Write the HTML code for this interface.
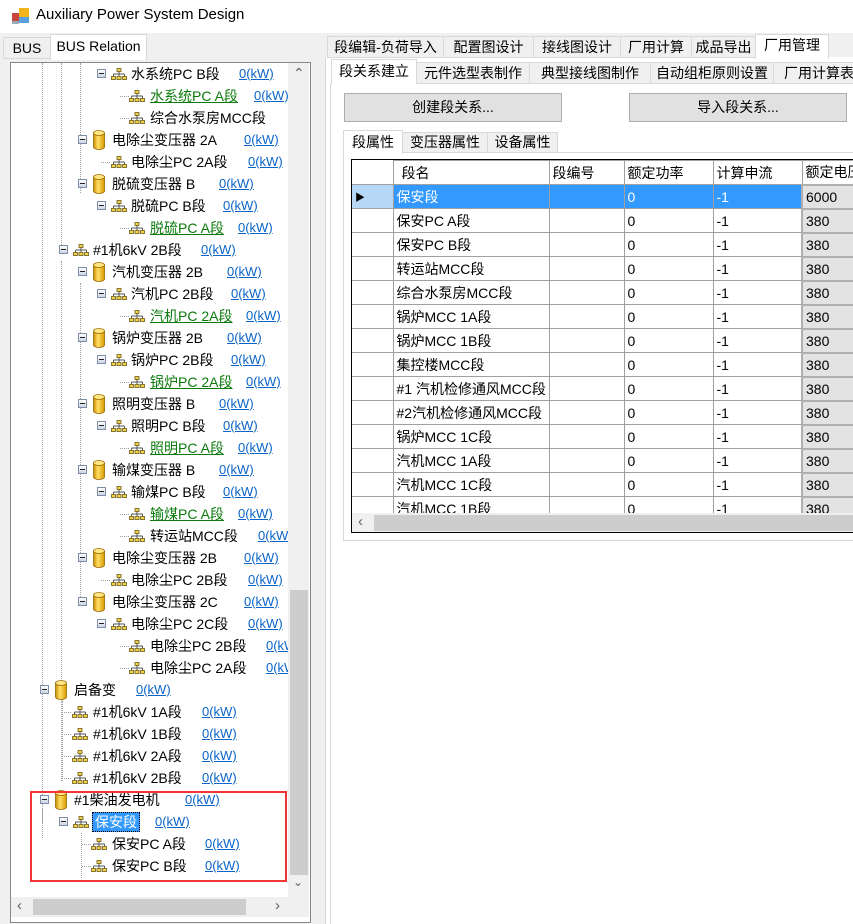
<!DOCTYPE html>
<html><head><meta charset="utf-8"><style>
*{box-sizing:border-box;margin:0;padding:0}
body{width:853px;height:924px;overflow:hidden;background:#f0f0f0;font-family:"Liberation Sans","Noto Sans CJK SC",sans-serif;font-size:14px;color:#000;position:relative}
.a{position:absolute}
.title{left:0;top:0;width:853px;height:33px;background:#fff}
.tab{position:absolute;border:1px solid #d9d9d9;background:#f0f0f0;text-align:center;white-space:nowrap}
.tab.on{background:#fff;border-bottom:none;z-index:2}
.tree{left:10px;top:62px;width:301px;height:861px;border:1px solid #828790;background:#fff;overflow:hidden}
.vp{position:absolute;left:0;top:0;width:277px;height:834px;overflow:hidden}
.r{position:absolute;left:-11px;height:22px;width:400px}
.r span{position:absolute;top:2px;white-space:nowrap;line-height:18px}
.r u{position:absolute;top:3px;color:#0a64c8;font-size:13px;line-height:16px;white-space:nowrap}
.r .g{color:#0c7a0c;text-decoration:underline}
.e{position:absolute;top:6px;width:9px;height:9px;border:1px solid #7f8ea8;background:linear-gradient(#fff,#cdd5e3)}
.e:after{content:"";position:absolute;left:1px;top:3px;width:5px;height:1px;background:#222}
.r svg{position:absolute}
.hl{position:absolute;top:11px;height:0;border-top:1px dotted #a0a0a0}
.vl{position:absolute;width:0;border-left:1px dotted #a0a0a0}
table{border-collapse:collapse}
td{border:1px solid #a0a0a0;height:24px;padding:0 3px;white-space:nowrap;overflow:hidden;font-size:14px}
</style></head><body>
<svg width="0" height="0" style="position:absolute"><defs>
<symbol id="bus" viewBox="0 0 16 12"><rect x="6" y="0.5" width="4" height="3" fill="#f4d34a" stroke="#6b5a10" stroke-width="0.8"/><path d="M8 3.5V6M2.5 6H13.5M2.5 6V8M8 6V8M13.5 6V8" stroke="#555" stroke-width="1" fill="none"/><rect x="0.5" y="8.5" width="4" height="3" fill="#f4d34a" stroke="#6b5a10" stroke-width="0.8"/><rect x="6" y="8.5" width="4" height="3" fill="#f4d34a" stroke="#6b5a10" stroke-width="0.8"/><rect x="11.5" y="8.5" width="4" height="3" fill="#f4d34a" stroke="#6b5a10" stroke-width="0.8"/></symbol>
<linearGradient id="gd" x1="0" x2="1"><stop offset="0" stop-color="#c98a00"/><stop offset="0.4" stop-color="#ffe066"/><stop offset="1" stop-color="#d89a00"/></linearGradient>
<symbol id="tr" viewBox="0 0 12 20"><path d="M0.5 3V17A5.5 2.5 0 0 0 11.5 17V3Z" fill="url(#gd)" stroke="#9a6a00" stroke-width="0.8"/><ellipse cx="6" cy="3" rx="5.5" ry="2.5" fill="#ffe680" stroke="#9a6a00" stroke-width="0.8"/></symbol>
</defs></svg>

<div class="a title"></div>
<svg class="a" style="left:12px;top:7px" width="18" height="18"><rect x="0" y="6" width="8" height="8" fill="#c8463c"/><rect x="7" y="1" width="10" height="9" fill="#f2b51d"/><rect x="7" y="10" width="10" height="6" fill="#5aa0e0"/><rect x="0" y="14" width="7" height="3" fill="#9ab"/></svg>
<div class="a" style="left:36px;top:6px;font-size:15px">Auxiliary Power System Design</div>

<div class="tab" style="left:3px;top:37px;width:48px;height:22px;line-height:20px">BUS</div>
<div class="tab on" style="left:50px;top:34px;width:97px;height:26px;line-height:22px">BUS Relation</div>

<div class="a tree">
<div class="vp">
<div class="vl" style="left:31px;top:0;height:760px"></div>
<div class="vl" style="left:50px;top:0;height:190px"></div>
<div class="vl" style="left:69px;top:0;height:130px"></div>
<div class="vl" style="left:50px;top:198px;height:520px"></div>
<div class="vl" style="left:69px;top:220px;height:320px"></div>
<div class="vl" style="left:51px;top:638px;height:80px"></div>
<div class="vl" style="left:31px;top:745px;height:30px"></div>
<div class="vl" style="left:70px;top:770px;height:45px"></div>
<div class="r" style="top:0px"><i class="e" style="left:97px"></i><svg style="left:111px;top:5px" width="16" height="12"><use href="#bus"/></svg><span style="left:131px">水系统PC B段</span><u style="left:239px">0(kW)</u></div>
<div class="r" style="top:22px"><i class="hl" style="left:120px;width:9px"></i><svg style="left:129px;top:5px" width="16" height="12"><use href="#bus"/></svg><span class="g" style="left:150px">水系统PC A段</span><u style="left:254px">0(kW)</u></div>
<div class="r" style="top:44px"><i class="hl" style="left:120px;width:9px"></i><svg style="left:129px;top:5px" width="16" height="12"><use href="#bus"/></svg><span style="left:150px">综合水泵房MCC段</span></div>
<div class="r" style="top:66px"><i class="e" style="left:78px"></i><svg style="left:93px;top:1px" width="12" height="20"><use href="#tr"/></svg><span style="left:112px">电除尘变压器 2A</span><u style="left:244px">0(kW)</u></div>
<div class="r" style="top:88px"><i class="hl" style="left:101px;width:9px"></i><svg style="left:111px;top:5px" width="16" height="12"><use href="#bus"/></svg><span style="left:131px">电除尘PC 2A段</span><u style="left:248px">0(kW)</u></div>
<div class="r" style="top:110px"><i class="e" style="left:78px"></i><svg style="left:93px;top:1px" width="12" height="20"><use href="#tr"/></svg><span style="left:112px">脱硫变压器 B</span><u style="left:219px">0(kW)</u></div>
<div class="r" style="top:132px"><i class="e" style="left:97px"></i><svg style="left:111px;top:5px" width="16" height="12"><use href="#bus"/></svg><span style="left:131px">脱硫PC B段</span><u style="left:223px">0(kW)</u></div>
<div class="r" style="top:154px"><i class="hl" style="left:120px;width:9px"></i><svg style="left:129px;top:5px" width="16" height="12"><use href="#bus"/></svg><span class="g" style="left:150px">脱硫PC A段</span><u style="left:238px">0(kW)</u></div>
<div class="r" style="top:176px"><i class="e" style="left:59px"></i><svg style="left:73px;top:5px" width="16" height="12"><use href="#bus"/></svg><span style="left:93px">#1机6kV 2B段</span><u style="left:201px">0(kW)</u></div>
<div class="r" style="top:198px"><i class="e" style="left:78px"></i><svg style="left:93px;top:1px" width="12" height="20"><use href="#tr"/></svg><span style="left:112px">汽机变压器 2B</span><u style="left:227px">0(kW)</u></div>
<div class="r" style="top:220px"><i class="e" style="left:97px"></i><svg style="left:111px;top:5px" width="16" height="12"><use href="#bus"/></svg><span style="left:131px">汽机PC 2B段</span><u style="left:231px">0(kW)</u></div>
<div class="r" style="top:242px"><i class="hl" style="left:120px;width:9px"></i><svg style="left:129px;top:5px" width="16" height="12"><use href="#bus"/></svg><span class="g" style="left:150px">汽机PC 2A段</span><u style="left:246px">0(kW)</u></div>
<div class="r" style="top:264px"><i class="e" style="left:78px"></i><svg style="left:93px;top:1px" width="12" height="20"><use href="#tr"/></svg><span style="left:112px">锅炉变压器 2B</span><u style="left:227px">0(kW)</u></div>
<div class="r" style="top:286px"><i class="e" style="left:97px"></i><svg style="left:111px;top:5px" width="16" height="12"><use href="#bus"/></svg><span style="left:131px">锅炉PC 2B段</span><u style="left:231px">0(kW)</u></div>
<div class="r" style="top:308px"><i class="hl" style="left:120px;width:9px"></i><svg style="left:129px;top:5px" width="16" height="12"><use href="#bus"/></svg><span class="g" style="left:150px">锅炉PC 2A段</span><u style="left:246px">0(kW)</u></div>
<div class="r" style="top:330px"><i class="e" style="left:78px"></i><svg style="left:93px;top:1px" width="12" height="20"><use href="#tr"/></svg><span style="left:112px">照明变压器 B</span><u style="left:219px">0(kW)</u></div>
<div class="r" style="top:352px"><i class="e" style="left:97px"></i><svg style="left:111px;top:5px" width="16" height="12"><use href="#bus"/></svg><span style="left:131px">照明PC B段</span><u style="left:223px">0(kW)</u></div>
<div class="r" style="top:374px"><i class="hl" style="left:120px;width:9px"></i><svg style="left:129px;top:5px" width="16" height="12"><use href="#bus"/></svg><span class="g" style="left:150px">照明PC A段</span><u style="left:238px">0(kW)</u></div>
<div class="r" style="top:396px"><i class="e" style="left:78px"></i><svg style="left:93px;top:1px" width="12" height="20"><use href="#tr"/></svg><span style="left:112px">输煤变压器 B</span><u style="left:219px">0(kW)</u></div>
<div class="r" style="top:418px"><i class="e" style="left:97px"></i><svg style="left:111px;top:5px" width="16" height="12"><use href="#bus"/></svg><span style="left:131px">输煤PC B段</span><u style="left:223px">0(kW)</u></div>
<div class="r" style="top:440px"><i class="hl" style="left:120px;width:9px"></i><svg style="left:129px;top:5px" width="16" height="12"><use href="#bus"/></svg><span class="g" style="left:150px">输煤PC A段</span><u style="left:238px">0(kW)</u></div>
<div class="r" style="top:462px"><i class="hl" style="left:120px;width:9px"></i><svg style="left:129px;top:5px" width="16" height="12"><use href="#bus"/></svg><span style="left:150px">转运站MCC段</span><u style="left:258px">0(kW)</u></div>
<div class="r" style="top:484px"><i class="e" style="left:78px"></i><svg style="left:93px;top:1px" width="12" height="20"><use href="#tr"/></svg><span style="left:112px">电除尘变压器 2B</span><u style="left:244px">0(kW)</u></div>
<div class="r" style="top:506px"><i class="hl" style="left:101px;width:9px"></i><svg style="left:111px;top:5px" width="16" height="12"><use href="#bus"/></svg><span style="left:131px">电除尘PC 2B段</span><u style="left:248px">0(kW)</u></div>
<div class="r" style="top:528px"><i class="e" style="left:78px"></i><svg style="left:93px;top:1px" width="12" height="20"><use href="#tr"/></svg><span style="left:112px">电除尘变压器 2C</span><u style="left:244px">0(kW)</u></div>
<div class="r" style="top:550px"><i class="e" style="left:97px"></i><svg style="left:111px;top:5px" width="16" height="12"><use href="#bus"/></svg><span style="left:131px">电除尘PC 2C段</span><u style="left:248px">0(kW)</u></div>
<div class="r" style="top:572px"><i class="hl" style="left:120px;width:9px"></i><svg style="left:129px;top:5px" width="16" height="12"><use href="#bus"/></svg><span style="left:150px">电除尘PC 2B段</span><u style="left:266px">0(kW)</u></div>
<div class="r" style="top:594px"><i class="hl" style="left:120px;width:9px"></i><svg style="left:129px;top:5px" width="16" height="12"><use href="#bus"/></svg><span style="left:150px">电除尘PC 2A段</span><u style="left:266px">0(kW)</u></div>
<div class="r" style="top:616px"><i class="e" style="left:40px"></i><svg style="left:55px;top:1px" width="12" height="20"><use href="#tr"/></svg><span style="left:74px">启备变</span><u style="left:136px">0(kW)</u></div>
<div class="r" style="top:638px"><i class="hl" style="left:62px;width:9px"></i><svg style="left:72px;top:5px" width="16" height="12"><use href="#bus"/></svg><span style="left:93px">#1机6kV 1A段</span><u style="left:202px">0(kW)</u></div>
<div class="r" style="top:660px"><i class="hl" style="left:62px;width:9px"></i><svg style="left:72px;top:5px" width="16" height="12"><use href="#bus"/></svg><span style="left:93px">#1机6kV 1B段</span><u style="left:202px">0(kW)</u></div>
<div class="r" style="top:682px"><i class="hl" style="left:62px;width:9px"></i><svg style="left:72px;top:5px" width="16" height="12"><use href="#bus"/></svg><span style="left:93px">#1机6kV 2A段</span><u style="left:202px">0(kW)</u></div>
<div class="r" style="top:704px"><i class="hl" style="left:62px;width:9px"></i><svg style="left:72px;top:5px" width="16" height="12"><use href="#bus"/></svg><span style="left:93px">#1机6kV 2B段</span><u style="left:202px">0(kW)</u></div>
<div class="r" style="top:726px"><i class="e" style="left:40px"></i><svg style="left:55px;top:1px" width="12" height="20"><use href="#tr"/></svg><span style="left:74px">#1柴油发电机</span><u style="left:185px">0(kW)</u></div>
<div class="r" style="top:748px"><i class="e" style="left:59px"></i><svg style="left:73px;top:5px" width="16" height="12"><use href="#bus"/></svg><span style="left:92px;top:1px;padding:0 2px;background:#3399ff;color:#fff;border:1px dotted #000">保安段</span><u style="left:155px">0(kW)</u></div>
<div class="r" style="top:770px"><i class="hl" style="left:82px;width:9px"></i><svg style="left:91px;top:5px" width="16" height="12"><use href="#bus"/></svg><span style="left:112px">保安PC A段</span><u style="left:205px">0(kW)</u></div>
<div class="r" style="top:792px"><i class="hl" style="left:82px;width:9px"></i><svg style="left:91px;top:5px" width="16" height="12"><use href="#bus"/></svg><span style="left:112px">保安PC B段</span><u style="left:205px">0(kW)</u></div>
</div>
<div class="a" style="left:277px;top:0;width:21px;height:834px;background:#f0f0f0"></div>
<div class="a" style="left:282px;top:2px;color:#606060;font-size:14px">&#8963;</div>
<div class="a" style="left:279px;top:527px;width:18px;height:285px;background:#cdcdcd"></div>
<div class="a" style="left:282px;top:812px;color:#606060;font-size:12px">&#8964;</div>
<div class="a" style="left:0;top:834px;width:298px;height:20px;background:#f0f0f0"></div>
<div class="a" style="left:22px;top:836px;width:213px;height:16px;background:#cdcdcd"></div>
<div class="a" style="left:6px;top:834px;color:#606060;font-size:15px">&lsaquo;</div>
<div class="a" style="left:264px;top:834px;color:#606060;font-size:15px">&rsaquo;</div>
</div>
<div class="a" style="left:30px;top:791px;width:257px;height:91px;border:2px solid #f23535"></div>

<div class="a" style="left:325px;top:57px;width:528px;height:867px;background:#fff;border-left:1px solid #d9d9d9"></div>
<div class="tab" style="left:327px;top:36px;width:117px;height:22px;line-height:20px">段编辑-负荷导入</div>
<div class="tab" style="left:443px;top:36px;width:91px;height:22px;line-height:20px">配置图设计</div>
<div class="tab" style="left:533px;top:36px;width:88px;height:22px;line-height:20px">接线图设计</div>
<div class="tab" style="left:620px;top:36px;width:72px;height:22px;line-height:20px">厂用计算</div>
<div class="tab" style="left:691px;top:36px;width:65px;height:22px;line-height:20px">成品导出</div>
<div class="tab on" style="left:755px;top:34px;width:74px;height:25px;line-height:21px">厂用管理</div>

<div class="a" style="left:330px;top:83px;width:523px;height:841px;background:#fff;border-left:1px solid #d9d9d9"></div>
<div class="tab on" style="left:331px;top:59px;width:86px;height:25px;line-height:22px">段关系建立</div>
<div class="tab" style="left:416px;top:62px;width:114px;height:22px;line-height:20px">元件选型表制作</div>
<div class="tab" style="left:529px;top:62px;width:122px;height:22px;line-height:20px">典型接线图制作</div>
<div class="tab" style="left:650px;top:62px;width:124px;height:22px;line-height:20px">自动组柜原则设置</div>
<div class="tab" style="left:773px;top:62px;width:90px;height:22px;line-height:20px;text-align:left;padding-left:10px">厂用计算表</div>

<div class="a" style="left:344px;top:93px;width:218px;height:29px;background:#e1e1e1;border:1px solid #adadad;text-align:center;line-height:27px">创建段关系...</div>
<div class="a" style="left:629px;top:93px;width:218px;height:29px;background:#e1e1e1;border:1px solid #adadad;text-align:center;line-height:27px">导入段关系...</div>

<div class="a" style="left:343px;top:152px;width:520px;height:389px;border:1px solid #d9d9d9;background:#fff"></div>
<div class="tab on" style="left:343px;top:130px;width:60px;height:24px;line-height:22px">段属性</div>
<div class="tab" style="left:402px;top:132px;width:86px;height:21px;line-height:19px">变压器属性</div>
<div class="tab" style="left:487px;top:132px;width:71px;height:21px;line-height:19px">设备属性</div>

<div class="a" style="left:351px;top:159px;width:510px;height:374px;border:1px solid #000;background:#fff;overflow:hidden">
<table class="a" style="left:0;top:0;table-layout:fixed;width:560px">
<colgroup><col style="width:41px"><col style="width:156px"><col style="width:75px"><col style="width:89px"><col style="width:89px"><col style="width:110px"></colgroup>
<tr><td style="border-top:none;border-left:none;height:23px"></td><td style="padding-left:8px;height:23px">段名</td><td>段编号</td><td>额定功率</td><td>计算申流</td><td>额定电压</td></tr>
<tr style="background:#3399ff;color:#fff"><td style="background:#b6d7f5;color:#000;border-left:none;font-size:10px">&#9654;</td><td>保安段</td><td></td><td>0</td><td>-1</td><td style="background:#e3e3e3;color:#000;border:2px solid #b0b0b0">6000</td></tr>
<tr><td style="border-left:none"></td><td>保安PC A段</td><td></td><td>0</td><td>-1</td><td style="background:#e3e3e3;border:2px solid #b0b0b0">380</td></tr>
<tr><td style="border-left:none"></td><td>保安PC B段</td><td></td><td>0</td><td>-1</td><td style="background:#e3e3e3;border:2px solid #b0b0b0">380</td></tr>
<tr><td style="border-left:none"></td><td>转运站MCC段</td><td></td><td>0</td><td>-1</td><td style="background:#e3e3e3;border:2px solid #b0b0b0">380</td></tr>
<tr><td style="border-left:none"></td><td>综合水泵房MCC段</td><td></td><td>0</td><td>-1</td><td style="background:#e3e3e3;border:2px solid #b0b0b0">380</td></tr>
<tr><td style="border-left:none"></td><td>锅炉MCC 1A段</td><td></td><td>0</td><td>-1</td><td style="background:#e3e3e3;border:2px solid #b0b0b0">380</td></tr>
<tr><td style="border-left:none"></td><td>锅炉MCC 1B段</td><td></td><td>0</td><td>-1</td><td style="background:#e3e3e3;border:2px solid #b0b0b0">380</td></tr>
<tr><td style="border-left:none"></td><td>集控楼MCC段</td><td></td><td>0</td><td>-1</td><td style="background:#e3e3e3;border:2px solid #b0b0b0">380</td></tr>
<tr><td style="border-left:none"></td><td>#1 汽机检修通风MCC段</td><td></td><td>0</td><td>-1</td><td style="background:#e3e3e3;border:2px solid #b0b0b0">380</td></tr>
<tr><td style="border-left:none"></td><td>#2汽机检修通风MCC段</td><td></td><td>0</td><td>-1</td><td style="background:#e3e3e3;border:2px solid #b0b0b0">380</td></tr>
<tr><td style="border-left:none"></td><td>锅炉MCC 1C段</td><td></td><td>0</td><td>-1</td><td style="background:#e3e3e3;border:2px solid #b0b0b0">380</td></tr>
<tr><td style="border-left:none"></td><td>汽机MCC 1A段</td><td></td><td>0</td><td>-1</td><td style="background:#e3e3e3;border:2px solid #b0b0b0">380</td></tr>
<tr><td style="border-left:none"></td><td>汽机MCC 1C段</td><td></td><td>0</td><td>-1</td><td style="background:#e3e3e3;border:2px solid #b0b0b0">380</td></tr>
<tr><td style="border-left:none"></td><td>汽机MCC 1B段</td><td></td><td>0</td><td>-1</td><td style="background:#e3e3e3;border:2px solid #b0b0b0">380</td></tr>
</table>
<div class="a" style="left:0;top:353px;width:510px;height:20px;background:#f0f0f0"></div>
<div class="a" style="left:22px;top:355px;width:490px;height:16px;background:#cdcdcd"></div>
<div class="a" style="left:6px;top:353px;color:#606060;font-size:15px">&lsaquo;</div>
</div>
</body></html>
